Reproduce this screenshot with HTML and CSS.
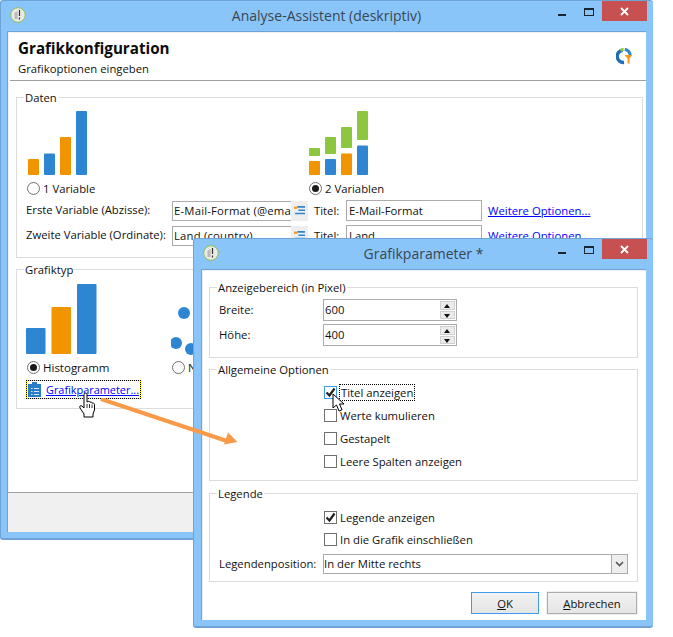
FILE: index.html
```html
<!DOCTYPE html>
<html lang="de">
<head>
<meta charset="utf-8">
<title>Analyse-Assistent</title>
<link rel="stylesheet" href="styles.css">
</head>
<body>
<div class="desk">

  <section class="window window-main">
    <header class="titlebar">
      <svg class="app-icon" viewBox="0 0 16 16"><circle cx="8" cy="8" r="7.3" fill="#e9e9e6" stroke="#8fbf4e" stroke-width="1"/><path d="M4.500 12V6l3-2v8z" fill="#b9b9b5"/><path d="M9.500 3v6M9.500 10.500v2" stroke="#333" stroke-width="1.200"/></svg>
      <span class="title">Analyse-Assistent (deskriptiv)</span>
      <div class="controls">
        <span class="ctl-min"></span><span class="ctl-max"></span>
        <span class="ctl-close"><svg viewBox="0 0 9 9"><path d="M1 1l7 7M8 1L1 8" stroke="#fff" stroke-width="1.800"/></svg></span>
      </div>
    </header>
    <div class="client">
      <div class="wizard-head">
        <div>
          <h1 class="wizard-title">Grafikkonfiguration</h1>
          <p class="wizard-sub">Grafikoptionen eingeben</p>
        </div>
        <svg class="wizard-icon" viewBox="0 0 17 17">
          <path d="M6.800 2.200A6 6 0 0 0 8 14.500" fill="none" stroke="#1f6db5" stroke-width="3.400"/>
          <path d="M4.500 2.500A6 6 0 0 1 7.600 1.400" fill="none" stroke="#8dc63f" stroke-width="3"/>
          <path d="M8.800 1.500A6 6 0 0 1 14.200 7" fill="none" stroke="#2e86d2" stroke-width="3.200"/>
          <path d="M8.500 7h8l-3 3.600V16l-2-1v-4.400z" fill="#f39a1e"/>
        </svg>
      </div>
      <div class="wizard-body">
        <fieldset class="group group-data">
          <legend>Daten</legend>
          <div class="choices">
            <div class="choice">
              <svg class="chart-small" viewBox="0 0 70 68">
                <rect x="2" y="51" width="11" height="16" rx="1" fill="#f09400"/>
                <rect x="18" y="45.500" width="11" height="21.500" rx="1" fill="#2e86d2"/>
                <rect x="34" y="29" width="11" height="38" rx="1" fill="#f09400"/>
                <rect x="50" y="3" width="11" height="64" rx="1" fill="#2e86d2"/>
              </svg>
              <label class="radio-line"><span class="radio"></span><span class="radio-text">1 Variable</span></label>
            </div>
            <div class="choice">
              <svg class="chart-small" viewBox="0 0 70 68">
                <rect x="1" y="40" width="11" height="8" rx="1" fill="#8dc63f"/>
                <rect x="1" y="53" width="11" height="14" rx="1" fill="#f09400"/>
                <rect x="17" y="29" width="11" height="17" rx="1" fill="#8dc63f"/>
                <rect x="17" y="51" width="11" height="16" rx="1" fill="#2e86d2"/>
                <rect x="33" y="19" width="11" height="21" rx="1" fill="#8dc63f"/>
                <rect x="33" y="45.500" width="11" height="21.500" rx="1" fill="#f09400"/>
                <rect x="49" y="3" width="11" height="29" rx="1" fill="#8dc63f"/>
                <rect x="49" y="37.500" width="11" height="29.500" rx="1" fill="#2e86d2"/>
              </svg>
              <label class="radio-line"><span class="radio radio-on"></span><span class="radio-text">2 Variablen</span></label>
            </div>
          </div>
          <div class="var-row">
            <span class="var-label">Erste Variable (Abzisse):</span>
            <div class="picker"><span class="picker-text">E-Mail-Format (@email)</span><span class="picker-btn"><svg viewBox="0 0 10 10"><path d="M0 1.500h3v2H0z" fill="#f39a1e"/><path d="M3 1h7v1.500H3zM4 4h6v1.500H4zM1 7h9v1.500H1z" fill="#2e86d2"/></svg></span></div>
            <span class="titel-label">Titel:</span>
            <span class="text-field">E-Mail-Format</span>
            <a class="link" href="#">Weitere Optionen...</a>
          </div>
          <div class="var-row">
            <span class="var-label">Zweite Variable (Ordinate):</span>
            <div class="picker"><span class="picker-text">Land (country)</span><span class="picker-btn"><svg viewBox="0 0 10 10"><path d="M0 1.500h3v2H0z" fill="#f39a1e"/><path d="M3 1h7v1.500H3zM4 4h6v1.500H4zM1 7h9v1.500H1z" fill="#2e86d2"/></svg></span></div>
            <span class="titel-label">Titel:</span>
            <span class="text-field">Land</span>
            <a class="link" href="#">Weitere Optionen...</a>
          </div>
        </fieldset>
        <fieldset class="group group-type">
          <legend>Grafiktyp</legend>
          <div class="type-row">
            <div class="type-col">
              <svg class="chart-large" viewBox="0 0 72 72">
                <rect x="0" y="45" width="19.500" height="26" rx="1" fill="#2e86d2"/>
                <rect x="25.500" y="24" width="19.500" height="47" rx="1" fill="#f09400"/>
                <rect x="51" y="1" width="19.500" height="70" rx="1" fill="#2e86d2"/>
              </svg>
              <label class="radio-line radio-line-wide"><span class="radio radio-on"></span>Histogramm</label>
            </div>
            <div class="type-col type-col-scatter">
              <svg class="chart-large" viewBox="0 0 72 72">
                <circle cx="13" cy="30" r="6" fill="#2e86d2"/>
                <circle cx="5" cy="60" r="6" fill="#2e86d2"/>
                <circle cx="20" cy="66" r="6" fill="#2e86d2"/>
              </svg>
              <label class="radio-line radio-line-wide"><span class="radio"></span>Nuage</label>
            </div>
          </div>
          <div class="param-link">
            <svg class="clip-icon" viewBox="0 0 13 15"><path d="M0 2h4V0h5v2h4v13H0z" fill="#2a7cc7"/><path d="M3 6h1.500v1H3zM6 6h5v1H6zM3 9h1.500v1H3zM6 9h5v1H6zM3 12h1.500v1H3zM6 12h5v1H6z" fill="#dbeafa"/></svg>
            <a class="link" href="#">Grafikparameter...</a>
          </div>
        </fieldset>
      </div>
      <div class="wizard-foot"></div>
    </div>
  </section>

  <section class="window window-params">
    <header class="titlebar">
      <svg class="app-icon" viewBox="0 0 16 16"><circle cx="8" cy="8" r="7.3" fill="#e9e9e6" stroke="#8fbf4e" stroke-width="1"/><path d="M4.500 12V6l3-2v8z" fill="#b9b9b5"/><path d="M9.500 3v6M9.500 10.500v2" stroke="#333" stroke-width="1.200"/></svg>
      <span class="title">Grafikparameter *</span>
      <div class="controls">
        <span class="ctl-min"></span><span class="ctl-max"></span>
        <span class="ctl-close"><svg viewBox="0 0 9 9"><path d="M1 1l7 7M8 1L1 8" stroke="#fff" stroke-width="1.800"/></svg></span>
      </div>
    </header>
    <div class="client client-params">
      <fieldset class="group group-area">
        <legend>Anzeigebereich (in Pixel)</legend>
        <div class="opt-row">
          <span class="opt-label">Breite:</span>
          <div class="spin"><span class="spin-value">600</span><span class="spin-btns"><span class="spin-up"></span><span class="spin-down"></span></span></div>
        </div>
        <div class="opt-row">
          <span class="opt-label">Höhe:</span>
          <div class="spin"><span class="spin-value">400</span><span class="spin-btns"><span class="spin-up"></span><span class="spin-down"></span></span></div>
        </div>
      </fieldset>
      <fieldset class="group group-general">
        <legend>Allgemeine Optionen</legend>
        <label class="check-line"><span class="check check-hot"><svg viewBox="0 0 11 11"><path d="M1.500 5.500l3 3 5-7" fill="none" stroke="#222" stroke-width="2.200"/></svg></span><span class="focus-text">Titel anzeigen</span></label>
        <label class="check-line"><span class="check"></span>Werte kumulieren</label>
        <label class="check-line"><span class="check"></span>Gestapelt</label>
        <label class="check-line"><span class="check"></span>Leere Spalten anzeigen</label>
      </fieldset>
      <fieldset class="group group-legend">
        <legend>Legende</legend>
        <label class="check-line check-line-tight"><span class="check"><svg viewBox="0 0 11 11"><path d="M1.500 5.500l3 3 5-7" fill="none" stroke="#222" stroke-width="2.200"/></svg></span>Legende anzeigen</label>
        <label class="check-line check-line-tight"><span class="check"></span>In die Grafik einschließen</label>
        <div class="opt-row opt-row-combo">
          <span class="opt-label">Legendenposition:</span>
          <div class="combo"><span class="combo-value">In der Mitte rechts</span><span class="combo-btn"><svg viewBox="0 0 9 6"><path d="M1 1l3.500 3.500L8 1" fill="none" stroke="#555" stroke-width="1.600"/></svg></span></div>
        </div>
      </fieldset>
      <div class="actions">
        <button class="btn btn-default" type="button"><u>O</u>K</button>
        <button class="btn" type="button"><u>A</u>bbrechen</button>
      </div>
    </div>
  </section>

  <svg class="arrow" viewBox="0 0 140 50">
    <path d="M1 1L127 43" stroke="#f79a4a" stroke-width="4" fill="none"/>
    <path d="M128 34.500L137.500 44L124 46.500z" fill="#f79a4a"/>
  </svg>
  <svg class="cursor-hand" viewBox="0 0 17 26">
    <path d="M5 2.500c0-2 3-2 3 0V10l1-.5c1-.5 2 0 2 .8 1-.6 2.200 0 2.200.9 1-.5 2.300.2 2.300 1.300V18l-1.500 4v3H5v-3l-4-6c-1-2 1-3 2-2l2 2z" fill="#fff" stroke="#000" stroke-width="1"/>
    <path d="M8 12v4M10.500 12v4M13 12.500V16" stroke="#000" stroke-width=".8"/>
  </svg>
  <svg class="cursor-arrow" viewBox="0 0 13 19">
    <path d="M1 1v14l3.500-3 2.500 6 3-1.200-2.500-5.800H12z" fill="#fff" stroke="#000" stroke-width="1"/>
  </svg>
</div>
</body>
</html>
```
FILE: styles.css
```css
* { box-sizing: border-box; }
html, body { margin: 0; padding: 0; background: #fff; }
body { font-family: "Open Sans", "Noto Sans", sans-serif; font-size: 11.3px; color: #111; }
.desk { position: relative; width: 673px; height: 637px; overflow: hidden; background: #fff; }

.window { position: absolute; display: flex; flex-direction: column; background: #8ac5fa; border: 1px solid #6fa3d8; border-width: 1px 0 2px 1px; border-radius: 3px; padding: 0 7px 6px 6px; }
.window-main { left: 0; top: 0; width: 653px; height: 540px; }
.window-params { left: 193px; top: 238px; width: 460px; height: 390px; padding-left: 7px; }

.titlebar { position: relative; flex: none; height: 30px; display: flex; align-items: center; justify-content: center; }
.app-icon { position: absolute; left: 3px; top: 6px; width: 16px; height: 16px; }
.window-params .app-icon { left: 2px; }
.title { font-size: 14px; color: #3a4652; position: relative; top: -1px; }
.controls { position: absolute; right: -1px; top: 0; width: 89px; height: 20px; }
.ctl-min { position: absolute; left: 0; top: 13px; width: 8px; height: 2px; background: #1c2630; }
.ctl-max { position: absolute; left: 26px; top: 7px; width: 10px; height: 8px; border: 1px solid #1c2630; border-top-width: 2px; }
.ctl-close { position: absolute; right: 0; top: 0; width: 45px; height: 20px; background: #c75050; display: flex; align-items: center; justify-content: center; }
.ctl-close svg { width: 9px; height: 9px; }

.client { flex: 1; display: flex; flex-direction: column; background: #fff; border: 1px solid #6fa3d8; border-width: 1px 0 0 1px; box-shadow: inset 1px 1px 0 #f0f0f0; min-height: 0; }

.wizard-head { flex: none; height: 49px; margin-left: 2px; padding: 7px 8px 0 8px; border-bottom: 1px solid #a0a0a0; display: flex; justify-content: space-between; }
.wizard-title { margin: 0; font-size: 15.200px; font-weight: 700; line-height: 18px; color: #0c0c0c; }
.wizard-sub { margin: 4px 0 0; line-height: 16px; font-size: 11.300px; }
.wizard-icon { width: 17px; height: 17px; margin: 9px 5px 0 0; }

.wizard-body { flex: 1; padding: 9px 3px 0 7px; border-left: 1px solid transparent; min-height: 0; }
.wizard-foot { flex: none; height: 40px; background: #f0f0f0; border-top: 1px solid #a0a0a0; }

.group { margin: 0; min-width: 0; padding: 0; border: 1px solid #dcdcdc; }
.group legend { margin-left: 7px; padding: 0 1px; line-height: 15px; }
.group-data legend, .group-type legend { margin-left: -2px; }

.group-data { height: 168px; padding: 3px 0 0 9px; }
.choices { display: grid; grid-template-columns: 282px 1fr; }
.chart-small { display: block; width: 70px; height: 68px; }
.radio-line { display: flex; align-items: center; gap: 3px; height: 15px; margin-top: 5px; line-height: 15px; }
.radio-text { padding-bottom: 1px; }
.radio { width: 13px; height: 13px; margin-left: 1px; border: 1px solid #707070; border-radius: 50%; background: #fff; position: relative; }
.radio-on::after { content: ""; position: absolute; left: 2px; top: 2px; width: 7px; height: 7px; border-radius: 50%; background: #1a1a1a; }
.var-row { display: flex; align-items: center; height: 21px; margin-top: 4px; }
.var-row:first-of-type { margin-top: 6px; }
.var-label { width: 146px; flex: none; padding-bottom: 2px; }
.picker { flex: none; width: 136px; height: 20px; display: flex; border: 1px solid #ababab; border-right: 0; background: #fff; }
.picker-text { width: 118px; overflow: hidden; white-space: nowrap; padding-left: 1px; line-height: 17px; letter-spacing: .2px; }
.picker-btn { flex: 1; background: #eeeeee; display: flex; align-items: center; justify-content: center; margin: -1px 0; }
.picker-btn svg { width: 11px; height: 11px; }
.titel-label { margin-left: 6px; width: 32px; flex: none; }
.text-field { width: 136px; height: 21px; flex: none; border: 1px solid #ababab; line-height: 19px; padding-left: 2px; }
.link { color: #0000ff; text-decoration: underline; }
.text-field + .link { margin-left: 6px; }

.group-type { margin-top: 4px; height: 147px; padding: 6px 0 0 9px; }
.type-row { display: flex; }
.type-col { width: 145px; }
.chart-large { display: block; width: 72px; height: 72px; }
.radio-line-wide { font-size: 11.500px; }
.param-link { display: inline-flex; align-items: center; gap: 5px; height: 19px; margin: 5px 0 0 0; padding: 0 1px; font-size: 10.900px; background: linear-gradient(#fff, #fff) padding-box, #ffee00 border-box; border: 1px dotted #000; }
.clip-icon { width: 13px; height: 15px; }

.client-params { padding: 10px 8px 0 7px; }
.group-area { height: 78px; padding-top: 4px; }
.opt-row { display: flex; align-items: center; height: 22px; margin-bottom: 3px; padding-left: 9px; }
.opt-label { width: 104px; flex: none; padding-bottom: 1px; }
.spin { width: 134px; height: 22px; display: flex; justify-content: space-between; border: 1px solid #ababab; background: #fff; }
.spin-value { padding-left: 1px; line-height: 19px; }
.spin-btns { width: 15px; margin: 1px 1px 1px 0; display: flex; flex-direction: column; gap: 1px; }
.spin-up, .spin-down { flex: 1; background: #ebebeb; border: 1px solid #d0d0d0; position: relative; }
.spin-up::after, .spin-down::after { content: ""; position: absolute; left: 3px; top: 2px; border-left: 3px solid transparent; border-right: 3px solid transparent; }
.spin-up::after { border-bottom: 4px solid #111; }
.spin-down::after { border-top: 4px solid #111; }

.group-general { margin-top: 4px; height: 119px; padding-top: 9px; }
.check-line { display: flex; align-items: center; gap: 3px; height: 13px; margin: 0 0 10px 114px; white-space: nowrap; }
.check-line-tight { margin-bottom: 9px; }
.check { width: 13px; height: 13px; flex: none; border: 1px solid #707070; background: #fff; display: flex; align-items: center; justify-content: center; }
.check svg { width: 11px; height: 11px; }
.check-hot { border-color: #3c9cf0; }
.focus-text { outline: 1px dotted #000; padding: 0 1px; line-height: 15px; }

.group-legend { margin-top: 5px; height: 96px; padding-top: 10px; }
.opt-row-combo { margin: -2px 0 0; height: 21px; }
.combo { width: 305px; height: 20px; display: flex; justify-content: space-between; border: 1px solid #ababab; }
.combo-value { line-height: 18px; }
.combo-btn { width: 16px; background: #eeeeee; border-left: 1px solid #ababab; display: flex; align-items: center; justify-content: center; }
.combo-btn svg { width: 9px; height: 6px; }

.actions { display: flex; justify-content: flex-end; gap: 8px; margin-top: 10px; padding-right: 1px; }
.btn { height: 22px; width: 90px; padding: 0; font: inherit; color: #111; background: linear-gradient(#f2f2f2, #e5e5e5); border: 1px solid #acacac; outline: 1px solid #efefef; }
.btn-default { width: 68px; border-color: #3c9cf0; outline: 0; }

.arrow { position: absolute; left: 100px; top: 398px; width: 140px; height: 50px; }
.cursor-hand { position: absolute; left: 79px; top: 392px; width: 17px; height: 26px; }
.cursor-arrow { position: absolute; left: 332px; top: 393px; width: 13px; height: 19px; }
```
